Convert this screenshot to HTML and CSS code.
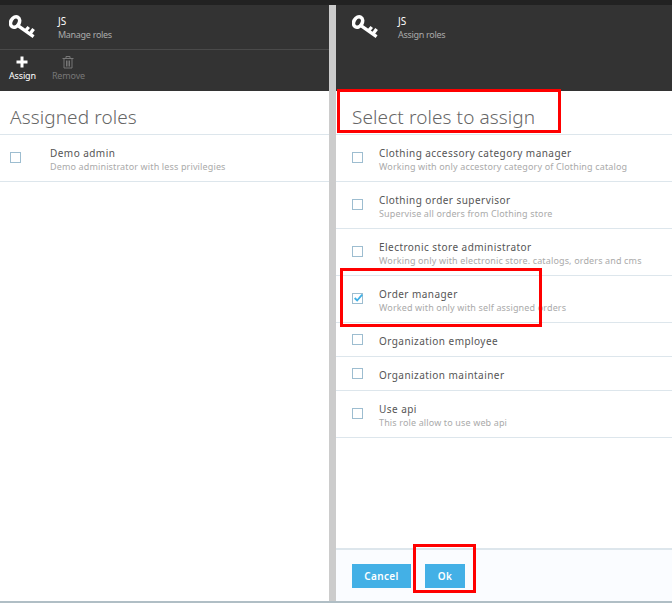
FILE: index.html
```html
<!DOCTYPE html>
<html lang="en">
<head>
  <meta charset="UTF-8">
  <title>Manage roles</title>
  <link rel="stylesheet" href="styles.css">
</head>
<body>
  <svg class="sprite" width="0" height="0">
    <symbol id="key" viewBox="0 0 28 28">
      <ellipse cx="6.300" cy="8.300" rx="4.300" ry="5.700" transform="rotate(30 6.300 8.300)" fill="none" stroke="currentColor" stroke-width="3.800"/>
      <path d="M10 12.500 L25.500 23.500 M21.500 21 L25.500 15.500 M17 17.500 L20.500 13.500" fill="none" stroke="currentColor" stroke-width="3.400"/>
    </symbol>
  </svg>

  <div class="app">
    <section class="panel">
      <header class="head">
        <div class="title-row">
          <svg class="key"><use href="#key"/></svg>
          <div>
            <div class="user">JS</div>
            <div class="sub">Manage roles</div>
          </div>
        </div>
        <div class="toolbar">
          <div class="tool">
            <svg class="tool-icon" viewBox="0 0 14 14"><path d="M5.500 1.500h3v4h4v3h-4v4h-3v-4h-4v-3h4z" fill="currentColor"/></svg>
            <span>Assign</span>
          </div>
          <div class="tool tool-off">
            <svg class="tool-icon" viewBox="0 0 14 14"><path d="M1.500 3.500h11M5 3V1.500h4V3M3 4v9h8V4M5.500 5.500v6M7 5.500v6M8.500 5.500v6" fill="none" stroke="currentColor" stroke-width="1"/></svg>
            <span>Remove</span>
          </div>
        </div>
      </header>
      <h2 class="heading">Assigned roles</h2>
      <ul class="roles">
        <li class="role">
          <span class="check"></span>
          <div class="role-text"><div class="role-name">Demo admin</div><div class="role-desc">Demo administrator with less privilegies</div></div>
        </li>
      </ul>
    </section>

    <section class="panel panel-right">
      <header class="head">
        <div class="title-row">
          <svg class="key"><use href="#key"/></svg>
          <div>
            <div class="user">JS</div>
            <div class="sub">Assign roles</div>
          </div>
        </div>
      </header>
      <h2 class="heading">Select roles to assign</h2>
      <ul class="roles">
        <li class="role">
          <span class="check"></span>
          <div class="role-text"><div class="role-name">Clothing accessory category manager</div><div class="role-desc">Working with only accestory category of Clothing catalog</div></div>
        </li>
        <li class="role">
          <span class="check"></span>
          <div class="role-text"><div class="role-name">Clothing order supervisor</div><div class="role-desc">Supervise all orders from Clothing store</div></div>
        </li>
        <li class="role">
          <span class="check"></span>
          <div class="role-text"><div class="role-name">Electronic store administrator</div><div class="role-desc">Working only with electronic store. catalogs, orders and cms</div></div>
        </li>
        <li class="role">
          <span class="check">
            <svg viewBox="0 0 12 12"><path d="M2 6l3 3 6-7" fill="none" stroke="#3fb0e6" stroke-width="2.200"/></svg>
          </span>
          <div class="role-text"><div class="role-name">Order manager</div><div class="role-desc">Worked with only with self assigned orders</div></div>
        </li>
        <li class="role role-short">
          <span class="check"></span>
          <div class="role-text"><div class="role-name">Organization employee</div></div>
        </li>
        <li class="role role-short">
          <span class="check"></span>
          <div class="role-text"><div class="role-name">Organization maintainer</div></div>
        </li>
        <li class="role">
          <span class="check"></span>
          <div class="role-text"><div class="role-name">Use api</div><div class="role-desc">This role allow to use web api</div></div>
        </li>
      </ul>
      <footer class="actions">
        <button class="btn btn-cancel">Cancel</button>
        <button class="btn btn-ok">Ok</button>
      </footer>
      <div class="mark mark-heading"></div>
      <div class="mark mark-order"></div>
      <div class="mark mark-ok"></div>
    </section>
  </div>
</body>
</html>
```

FILE: styles.css
```css
* {
  margin: 0;
  padding: 0;
  box-sizing: border-box;
}

html, body {
  height: 603px;
  overflow: hidden;
}

body {
  background-color: #ccc;
  font-family: "Noto Sans", Arial, sans-serif;
  padding-top: 5px;
  position: relative;
}

body::before {
  content: "";
  position: absolute;
  top: 0;
  left: 0;
  right: 0;
  height: 5px;
  background-color: #222;
}

.sprite {
  position: absolute;
}

.app {
  display: grid;
  grid-template-columns: 329px 336px;
  column-gap: 7px;
  height: 598px;
  border-bottom: 2px solid #b0bec5;
}

.panel {
  background-color: #fff;
  display: flex;
  flex-direction: column;
  position: relative;
  min-height: 0;
}

.head {
  background-color: #333;
  height: 86px;
  color: #fff;
}

.title-row {
  display: flex;
  height: 44px;
  padding: 9px 0 0 9px;
}

.key {
  width: 27px;
  height: 27px;
  margin-right: 22px;
  color: #fff;
}

.panel-right .key {
  margin-left: 7px;
  margin-right: 19px;
}

.user {
  font-size: 10px;
  line-height: 13px;
  margin-top: 1px;
}

.sub {
  font-size: 9px;
  line-height: 13px;
  color: #aaa;
  letter-spacing: -0.3px;
}

.toolbar {
  display: flex;
  border-top: 1px solid #4a4a4a;
  padding: 5px 0 0 9px;
  gap: 16px;
}

.tool {
  display: flex;
  flex-direction: column;
  align-items: center;
  font-size: 9px;
  line-height: 12px;
  letter-spacing: -0.15px;
}

.tool-off {
  color: #777;
}

.tool-icon {
  width: 14px;
  height: 14px;
  margin-bottom: 1px;
}

.heading {
  font-size: 19px;
  font-weight: 300;
  color: #666;
  height: 44px;
  line-height: 24px;
  padding: 14px 0 0 10px;
  letter-spacing: 0.1px;
  border-bottom: 1px solid #dde6ec;
}

.panel-right .heading {
  padding-left: 16px;
}

.roles {
  list-style: none;
  flex: 1;
}

.role {
  display: flex;
  align-items: center;
  height: 47px;
  padding-left: 10px;
  border-bottom: 1px solid #dde6ec;
}

.panel-right .role {
  padding-left: 16px;
}

.role-short {
  height: 34px;
}

.role-text {
  margin-top: 2px;
}

.role-short .role-text {
  margin-top: 3px;
}

.check {
  width: 11px;
  height: 11px;
  border: 1px solid #9dbdd0;
  margin-right: 29px;
  margin-top: -1px;
  flex: none;
  position: relative;
}

.role-short .check {
  margin-top: 0;
}

.panel-right .check {
  margin-right: 16px;
}

.check svg {
  position: absolute;
  left: 0;
  top: -1px;
  width: 10px;
  height: 10px;
}

.role-name {
  font-size: 10px;
  line-height: 14px;
  color: #555;
  letter-spacing: 0.45px;
}

.role-desc {
  font-size: 9px;
  line-height: 13px;
  color: #aaa;
  letter-spacing: 0.14px;
}

.actions {
  height: 53px;
  background-color: #fafcff;
  border-top: 2px solid #dde6ec;
  display: flex;
  gap: 14px;
  padding: 14px 0 0 16px;
}

.btn {
  height: 24px;
  border: none;
  background-color: #43b0e6;
  color: #fff;
  font-family: inherit;
  font-size: 10px;
  font-weight: 600;
  letter-spacing: 0.4px;
}

.btn-cancel {
  width: 59px;
}

.btn-ok {
  width: 40px;
}

/* annotation boxes */
.mark {
  position: absolute;
  border: 3px solid #f00;
}

.mark-heading {
  left: 1px;
  top: 84px;
  width: 224px;
  height: 44px;
}

.mark-order {
  left: 4px;
  top: 263px;
  width: 202px;
  height: 59px;
}

.mark-ok {
  left: 77px;
  top: 539px;
  width: 63px;
  height: 49px;
}
```
